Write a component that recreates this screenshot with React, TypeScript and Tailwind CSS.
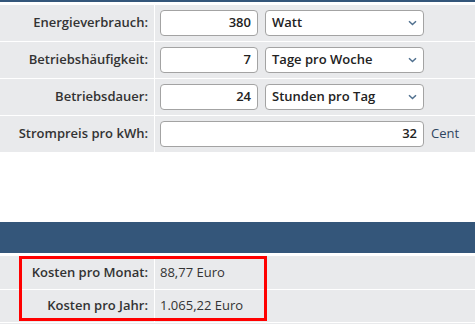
import React from "react";

const Chevron = () => (
  <svg width="9" height="6" viewBox="0 0 9 6" className="shrink-0">
    <path d="M1 1.2 L4.5 4.5 L8 1.2" fill="none" stroke="#50708f" strokeWidth="1.5" />
  </svg>
);

const Row = ({ label, children }: { label: string; children: React.ReactNode }) => (
  <div className="flex h-[36px] mb-[1px]">
    <div className="w-[154px] bg-[#e9eaec] flex items-center justify-end pr-[6px] text-[13px] font-semibold text-[#333]">
      {label}
    </div>
    <div className="flex-1 ml-[1px] bg-[#e9eaec] flex items-center pl-[5px] gap-[7px]">{children}</div>
  </div>
);

const NumInput = ({ value, w }: { value: string; w: string }) => (
  <div
    className={`${w} h-[26px] bg-white border border-[#a3a3a3] rounded-[4px] flex items-center justify-end pr-[6px] text-[13px] font-semibold text-[#222]`}
  >
    {value}
  </div>
);

const Select = ({ value }: { value: string }) => (
  <div className="w-[159px] h-[26px] bg-white border border-[#a3a3a3] rounded-[4px] flex items-center justify-between pl-[6px] pr-[6px] text-[13px] font-semibold text-[#222]">
    <span>{value}</span>
    <Chevron />
  </div>
);

export default function App() {
  return (
    <div
      className="w-[475px] h-[324px] bg-white relative overflow-hidden"
      style={{ fontFamily: '"Open Sans", "Noto Sans", sans-serif' }}
    >
      <div className="h-[2px] bg-[#34567a]" />
      <div className="h-[3px]" />
      <Row label="Energieverbrauch:">
        <NumInput value="380" w="w-[98px]" />
        <Select value="Watt" />
      </Row>
      <Row label="Betriebshäufigkeit:">
        <NumInput value="7" w="w-[98px]" />
        <Select value="Tage pro Woche" />
      </Row>
      <Row label="Betriebsdauer:">
        <NumInput value="24" w="w-[98px]" />
        <Select value="Stunden pro Tag" />
      </Row>
      <Row label="Strompreis pro kWh:">
        <NumInput value="32" w="w-[264px]" />
        <span className="text-[13px] text-[#2f4560]">Cent</span>
      </Row>
      <div className="h-[69px]" />
      <div className="h-[31px] bg-[#34567a]" />
      <div className="h-[3px]" />
      <div className="flex h-[33px] mb-[1px]">
        <div className="w-[154px] bg-[#e9eaec] flex items-center justify-end pr-[6px] text-[13px] font-semibold text-[#333]">
          Kosten pro Monat:
        </div>
        <div className="flex-1 ml-[1px] bg-[#e9eaec] flex items-center pl-[5px] text-[13px] text-[#333]">
          88,77 Euro
        </div>
      </div>
      <div className="flex h-[32px] mb-[1px]">
        <div className="w-[154px] bg-[#e9eaec] flex items-center justify-end pr-[6px] text-[13px] font-semibold text-[#333]">
          Kosten pro Jahr:
        </div>
        <div className="flex-1 ml-[1px] bg-[#e9eaec] flex items-center pl-[5px] text-[13px] text-[#333]">
          1.065,22 Euro
        </div>
      </div>
      <div className="h-[10px] bg-[#e9eaec]" />
      <div className="absolute left-[19px] top-[256px] w-[248px] h-[65px] border-[3px] border-[#ff0000]" />
    </div>
  );
}
